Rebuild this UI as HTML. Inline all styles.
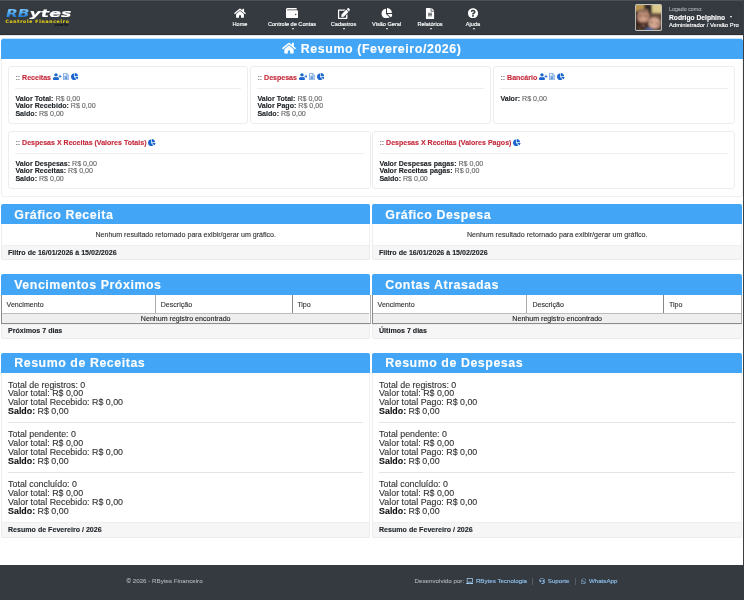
<!DOCTYPE html>
<html lang="pt-br">
<head>
<meta charset="utf-8">
<title>RBytes Financeiro</title>
<style>
*{box-sizing:border-box;margin:0;padding:0}
html,body{width:744px;height:600px;overflow:hidden;background:#fff;font-family:"Liberation Sans",Arial,sans-serif;color:#212529}
.abs{position:absolute}
#wrap{position:absolute;left:0;top:0;width:744px;height:600px;overflow:hidden;will-change:transform;-webkit-text-stroke:.12px}
#hdr{position:absolute;left:0;top:0;width:744px;height:35px;background:#343a40;border-bottom:1px solid #292d31}
#edge{position:absolute;left:743px;top:0;width:1px;height:600px;background:#3a3f44}
.nav{position:absolute;top:0;height:34px;width:0;color:#fff;font-size:5.6px;white-space:nowrap}
.nav svg{position:absolute;left:0;top:7.5px;transform:translateX(-50%);fill:#fff}
.nav span{position:absolute;left:0;top:21.3px;transform:translateX(-50%);line-height:6.5px;-webkit-text-stroke:.15px #fff}
.nav i{position:absolute;left:-0.3px;top:27.7px;border-left:1.9px solid transparent;border-right:1.9px solid transparent;border-top:2.2px solid #f4f4f4}
.bar{position:absolute;background:#42a5f5;border-radius:2px 2px 0 0}
.card{position:absolute;background:#fff;border:1px solid #ededed;border-radius:3px;height:58px}
.card .t{position:absolute;left:6.4px;top:6.9px;font-size:7.05px;line-height:8px;font-weight:bold;color:#c5283a;white-space:nowrap}
.card .t i{font-style:normal;color:#7d7d7d}
.card .hr{position:absolute;left:6.4px;right:6.4px;top:21px;height:1px;background:#efefef}
.card .l{position:absolute;left:6.4px;font-size:7.09px;line-height:8px;height:8px;color:#666;white-space:nowrap}
.card .l b{color:#212529}
.card svg{vertical-align:-0.6px;fill:#1a66cc;position:relative;top:0px}
.r1 svg{top:-0.5px}
.panel{position:absolute;border:1px solid #e3e3e3;border-top:none;background:#fff}
.ph{position:absolute;background:#42a5f5;color:#fff;font-weight:bold;font-size:12.4px;letter-spacing:.55px;line-height:20px;height:20px;padding-left:12.8px;padding-top:0.4px;border-radius:2px 2px 0 0;white-space:nowrap}
.pf{position:absolute;background:#f6f6f6;border-top:1px solid #ececec;font-weight:bold;font-size:7.09px;line-height:15.8px;padding-left:5.8px;color:#212529;white-space:nowrap}
.msg{position:absolute;text-align:center;font-size:7.09px;line-height:8px;color:#333;white-space:nowrap}
.th{position:absolute;font-size:7.09px;line-height:18px;height:18px;color:#333;white-space:nowrap}
.vl{position:absolute;width:1px;background:#ddd}
.none{position:absolute;background:#eee;border-top:1px solid #b5b5b5;border-bottom:1px solid #b5b5b5;text-align:center;font-size:7.09px;line-height:9px;height:10.5px;color:#222}
.sum{position:absolute;font-size:8.86px;line-height:8.75px;color:#333;white-space:nowrap}
.sum b{color:#111}
.shr{position:absolute;height:1px;background:#e4e4e4}
#ftr{position:absolute;left:0;top:565px;width:744px;height:35px;background:#343a40}
#ftr a{color:#6bb6ff;text-decoration:none}
#ftr svg{fill:#6bb6ff;vertical-align:-0.8px}
#ftr .sep{color:#5a6168}
</style>
</head>
<body>
<div id="wrap">
<div id="hdr">
<div class="abs" style="left:0;top:0;width:744px;height:1px;background:#4d5156"></div>
<div class="abs" id="logo1" style="left:5.6px;top:6.9px;font-family:'DejaVu Sans',sans-serif;font-size:9.8px;line-height:13px;font-weight:bold;font-style:italic;color:#fff;transform:scaleX(1.56);transform-origin:0 0;white-space:nowrap"><span style="background:linear-gradient(180deg,#6fc0fb 25%,#2583d8 75%);-webkit-background-clip:text;background-clip:text;color:transparent">RB</span><span style="font-size:11.2px">ytes</span></div>
<div class="abs" id="logo2" style="left:5.4px;top:19.2px;font-family:'DejaVu Sans',sans-serif;font-size:4.5px;line-height:6px;font-weight:bold;color:#e6d117;letter-spacing:.75px;white-space:nowrap">Controle Financeiro</div>
<div class="abs" style="left:54px;top:23px;font-size:3.2px;line-height:4px;font-weight:bold;font-style:italic;color:#111;letter-spacing:.45px;white-space:nowrap">.com.br</div>
<div class="nav" style="left:240px"><svg width="13" height="10.4" viewBox="0 0 576 512"><path d="M280.4 148.3L96 300.1V464a16 16 0 0 0 16 16l112.100-.3a16 16 0 0 0 15.900-16V368a16 16 0 0 1 16-16h64a16 16 0 0 1 16 16v95.600a16 16 0 0 0 16 16.100L464 480a16 16 0 0 0 16-16V300L295.700 148.300a12.200 12.200 0 0 0-15.300 0zM571.600 251.500L488 182.600V44.100a12 12 0 0 0-12-12h-56a12 12 0 0 0-12 12v72.600L318.500 43a48 48 0 0 0-61 0L4.300 251.500a12 12 0 0 0-1.600 16.900l25.500 31a12 12 0 0 0 16.900 1.600l235.200-193.700a12.200 12.200 0 0 1 15.300 0L530.900 301a12 12 0 0 0 16.900-1.600l25.500-31a12 12 0 0 0-1.700-16.900z"/></svg><span>Home</span></div>
<div class="nav" style="left:292px"><svg width="12" height="10.6" viewBox="0 0 512 448"><path d="M461.200 96H64c-8.800 0-16-7.200-16-16s7.200-16 16-16h384c8.800 0 16-7.200 16-16 0-26.500-21.500-48-48-48H64C28.700 0 0 28.700 0 64v320c0 35.300 28.700 64 64 64h397.200c28 0 50.800-21.500 50.800-48V144c0-26.500-22.800-48-50.800-48zM416 304c-17.700 0-32-14.300-32-32s14.300-32 32-32 32 14.300 32 32-14.300 32-32 32z"/></svg><span>Controle de Contas</span><i></i></div>
<div class="nav" style="left:343.5px"><svg width="12.5" height="11" viewBox="0 0 576 512"><path d="M402.600 83.200l90.200 90.200c3.800 3.800 3.800 10 0 13.800L274.400 405.600l-92.800 10.300c-12.400 1.400-22.900-9.100-21.500-21.500l10.300-92.800L388.800 83.200c3.800-3.800 10-3.800 13.800 0zm162-22.900l-48.800-48.800c-15.200-15.200-39.900-15.200-55.200 0l-35.400 35.400c-3.800 3.800-3.800 10 0 13.800l90.200 90.200c3.800 3.800 10 3.800 13.800 0l35.400-35.400c15.200-15.300 15.200-40 0-55.200zM384 346.200V448H64V128h229.800c3.200 0 6.200-1.300 8.500-3.500l40-40c7.600-7.600 2.200-20.500-8.500-20.500H48C21.500 64 0 85.500 0 112v352c0 26.500 21.500 48 48 48h352c26.500 0 48-21.500 48-48V306.200c0-10.700-12.900-16-20.500-8.500l-40 40c-2.200 2.300-3.500 5.300-3.500 8.500z"/></svg><span>Cadastros</span><i></i></div>
<div class="nav" style="left:386.6px"><svg width="11.5" height="10.5" viewBox="0 0 544 512"><path d="M527.800 288H290.500l158 158c6 6 16 6.500 22.200.7 38.700-36.500 65.300-85.600 73.100-140.900 1.400-9.500-6.400-17.800-16-17.800zm-15.800-64.800C503.700 103.700 408.300 8.300 288.800 0 279.700-.6 272 7.100 272 16.200V240h223.800c9.100 0 16.800-7.700 16.200-16.800zM224 288V50.700c0-9.600-8.300-17.400-17.800-16C86.900 51.600-4.200 155.900.1 280.400 4.600 408.500 114.900 513.600 243.100 512c50.400-.6 97-16.900 135.300-44 7.900-5.600 8.400-17.200 1.600-24.100L224 288z"/></svg><span>Visão Geral</span><i></i></div>
<div class="nav" style="left:430px"><svg width="8.5" height="11" viewBox="0 0 384 512"><path d="M224 136V0H24C10.700 0 0 10.700 0 24v464c0 13.300 10.700 24 24 24h336c13.300 0 24-10.700 24-24V160H248c-13.200 0-24-10.800-24-24zm64 236c0 6.600-5.400 12-12 12H108c-6.600 0-12-5.400-12-12v-8c0-6.600 5.400-12 12-12h168c6.600 0 12 5.400 12 12v8zm0-64c0 6.600-5.400 12-12 12H108c-6.600 0-12-5.400-12-12v-8c0-6.600 5.400-12 12-12h168c6.600 0 12 5.400 12 12v8zm0-72v8c0 6.600-5.400 12-12 12H108c-6.600 0-12-5.400-12-12v-8c0-6.600 5.400-12 12-12h168c6.600 0 12 5.400 12 12zm96-114.100v6.100H256V0h6.100c6.400 0 12.500 2.500 17 7l97.900 98c4.500 4.500 7 10.600 7 16.900z"/></svg><span>Relatórios</span><i></i></div>
<div class="nav" style="left:473px"><svg width="10.5" height="10.5" viewBox="0 0 512 512"><path d="M504 256c0 137-111 248-248 248S8 393 8 256C8 119.100 119 8 256 8s248 111.100 248 248zM262.700 90c-54.500 0-89.300 23-116.500 63.800-3.500 5.300-2.400 12.400 2.700 16.300l34.700 26.300c5.200 3.900 12.600 3 16.700-2.100 17.900-22.700 30.100-35.800 57.300-35.800 20.400 0 45.700 13.100 45.700 33 0 15-12.400 22.700-32.500 34C247.100 238.500 216 254.900 216 296v4c0 6.600 5.400 12 12 12h56c6.600 0 12-5.400 12-12v-1.300c0-28.500 83.200-29.600 83.200-106.700 0-58-60.200-102-116.500-102zM256 338c-25.400 0-46 20.600-46 46 0 25.400 20.600 46 46 46s46-20.600 46-46c0-25.400-20.600-46-46-46z"/></svg><span>Ajuda</span><i></i></div>
<svg class="abs" style="left:634.5px;top:4px" width="27" height="27" viewBox="0 0 27 27">
<defs><filter id="bl" x="-10%" y="-10%" width="120%" height="120%"><feGaussianBlur stdDeviation="1"/></filter><clipPath id="cp"><rect x="0.9" y="0.9" width="25.2" height="25.2" rx="1.1"/></clipPath></defs>
<rect x="0" y="0" width="27" height="27" rx="1.8" fill="#c4c4c1"/>
<g clip-path="url(#cp)"><g filter="url(#bl)">
<rect x="-2" y="-2" width="31" height="31" fill="#5e4a3e"/>
<rect x="-1" y="-1" width="10" height="8" fill="#b9954f"/>
<rect x="9" y="1" width="8" height="10" fill="#2b2723"/>
<rect x="17" y="-1" width="11" height="10" fill="#dccb8c"/>
<rect x="-1" y="7" width="4" height="21" fill="#3d2d27"/>
<ellipse cx="8.4" cy="13" rx="6.2" ry="7.6" fill="#bd8d76"/>
<ellipse cx="8.4" cy="6.6" rx="5.2" ry="1.8" fill="#8d6d5a"/>
<ellipse cx="8.2" cy="14.5" rx="3" ry="2.5" fill="#cf9f8a"/>
<ellipse cx="5.6" cy="12.3" rx="1.3" ry="0.7" fill="#4a3028"/>
<ellipse cx="10.8" cy="12.3" rx="1.3" ry="0.7" fill="#4a3028"/>
<path d="M1.800 15.500 Q2 25 8.300 26 Q14.200 25.500 14.800 15.500 Q11.500 19 8.300 18.300 Q5 19 1.800 15.500z" fill="#3f2a22"/>
<ellipse cx="8.300" cy="21.400" rx="2.200" ry="0.700" fill="#9a6e60"/>
<ellipse cx="19.800" cy="13" rx="6.200" ry="4.200" fill="#6b5141"/>
<ellipse cx="19.300" cy="19" rx="5.800" ry="5.800" fill="#d6a792"/>
<ellipse cx="22.400" cy="19.600" rx="1.300" ry="0.800" fill="#4f302f"/>
<ellipse cx="16.600" cy="18.400" rx="1.200" ry="0.800" fill="#5f403c"/>
<rect x="10.500" y="24" width="8" height="4" fill="#45609a"/>
<rect x="-1" y="24" width="4" height="5" fill="#2e2325"/>
</g></g></svg>
<div class="abs" style="left:669px;top:6px;font-size:5.3px;line-height:6px;color:#a6abb0;white-space:nowrap">Logado como:</div>
<div class="abs" style="left:669px;top:13.6px;font-size:6.7px;line-height:8px;font-weight:bold;color:#fff;white-space:nowrap">Rodrigo Delphino</div>
<div class="abs" style="left:729.6px;top:16.2px;border-left:1.9px solid transparent;border-right:1.9px solid transparent;border-top:2.1px solid #fff"></div>
<div class="abs" style="left:669px;top:22.2px;font-size:5.85px;line-height:7px;color:#fff;white-space:nowrap">Administrador / Versão Pro</div>
</div>
<div id="edge"></div>
<div class="abs" style="left:0;top:35px;width:743px;height:1px;background:rgba(52,58,64,.13)"></div>
<div class="abs" style="left:2px;top:38px;width:740px;height:1px;background:rgba(66,165,245,.3)"></div>
<div class="bar" style="left:1px;top:39px;width:742px;height:20px"></div>
<svg class="abs" style="left:281.8px;top:42.2px;fill:#fff" width="14" height="12.4" viewBox="0 0 576 512"><path d="M280.4 148.3L96 300.1V464a16 16 0 0 0 16 16l112.100-.3a16 16 0 0 0 15.900-16V368a16 16 0 0 1 16-16h64a16 16 0 0 1 16 16v95.600a16 16 0 0 0 16 16.100L464 480a16 16 0 0 0 16-16V300L295.700 148.300a12.200 12.200 0 0 0-15.300 0zM571.600 251.500L488 182.600V44.100a12 12 0 0 0-12-12h-56a12 12 0 0 0-12 12v72.600L318.500 43a48 48 0 0 0-61 0L4.300 251.500a12 12 0 0 0-1.600 16.900l25.500 31a12 12 0 0 0 16.900 1.600l235.200-193.700a12.200 12.200 0 0 1 15.300 0L530.900 301a12 12 0 0 0 16.900-1.600l25.500-31a12 12 0 0 0-1.700-16.900z"/></svg>
<div class="abs" style="left:300.8px;top:39.8px;font-size:12.4px;line-height:19px;font-weight:bold;color:#fff;letter-spacing:.58px;white-space:nowrap">Resumo (Fevereiro/2026)</div>
<div class="card r1" style="left:8px;top:66px;width:240px"><div class="t"><i>::</i> Receitas <svg width="8.5" height="7.09" viewBox="0 0 640 512"><path d="M624 208h-64v-64c0-8.800-7.200-16-16-16h-32c-8.800 0-16 7.200-16 16v64h-64c-8.800 0-16 7.200-16 16v32c0 8.800 7.200 16 16 16h64v64c0 8.800 7.200 16 16 16h32c8.800 0 16-7.200 16-16v-64h64c8.800 0 16-7.200 16-16v-32c0-8.800-7.200-16-16-16zm-400 48c70.700 0 128-57.300 128-128S294.700 0 224 0 96 57.300 96 128s57.300 128 128 128zm89.600 32h-16.700c-22.200 10.200-46.900 16-72.900 16s-50.600-5.800-72.900-16h-16.700C60.200 288 0 348.200 0 422.400V464c0 26.500 21.500 48 48 48h352c26.500 0 48-21.500 48-48v-41.600c0-74.200-60.200-134.400-134.400-134.400z"/></svg> <svg width="5.8" height="7.09" viewBox="0 0 58 73" preserveAspectRatio="none" style="margin:0 -0.1px 0 -0.2px"><path d="M5 4h32l16 16v49H5z" fill="#f4f9ff" stroke="#4f8fdc" stroke-width="7" stroke-linejoin="round"/><path d="M36 4v17h17" fill="none" stroke="#4f8fdc" stroke-width="5"/><path d="M15 33h28M15 45h28M15 57h28" stroke="#1a62c6" stroke-width="7" fill="none"/></svg> <svg width="7.53" height="7.09" viewBox="0 0 544 512"><path d="M527.800 288H290.500l158 158c6 6 16 6.500 22.200.7 38.700-36.500 65.300-85.600 73.100-140.900 1.400-9.500-6.400-17.800-16-17.800zm-15.800-64.800C503.700 103.700 408.300 8.300 288.800 0 279.700-.6 272 7.100 272 16.200V240h223.800c9.100 0 16.800-7.700 16.200-16.800zM224 288V50.700c0-9.600-8.300-17.400-17.800-16C86.900 51.600-4.200 155.900.1 280.400 4.600 408.500 114.900 513.600 243.100 512c50.400-.6 97-16.900 135.300-44 7.900-5.600 8.400-17.200 1.600-24.100L224 288z"/></svg></div><div class="hr"></div><div class="l" style="top:28.3px"><b>Valor Total:</b> R$ 0,00</div><div class="l" style="top:35.3px"><b>Valor Recebido:</b> R$ 0,00</div><div class="l" style="top:42.6px"><b>Saldo:</b> R$ 0,00</div></div>
<div class="card r1" style="left:250px;top:66px;width:241px"><div class="t"><i>::</i> Despesas <svg width="8.5" height="7.09" viewBox="0 0 640 512"><path d="M624 208h-64v-64c0-8.800-7.200-16-16-16h-32c-8.800 0-16 7.200-16 16v64h-64c-8.800 0-16 7.200-16 16v32c0 8.800 7.200 16 16 16h64v64c0 8.800 7.200 16 16 16h32c8.800 0 16-7.200 16-16v-64h64c8.800 0 16-7.200 16-16v-32c0-8.800-7.200-16-16-16zm-400 48c70.700 0 128-57.300 128-128S294.700 0 224 0 96 57.300 96 128s57.300 128 128 128zm89.600 32h-16.700c-22.200 10.200-46.900 16-72.900 16s-50.600-5.800-72.900-16h-16.700C60.200 288 0 348.200 0 422.400V464c0 26.500 21.500 48 48 48h352c26.500 0 48-21.500 48-48v-41.600c0-74.200-60.200-134.400-134.400-134.400z"/></svg> <svg width="5.8" height="7.09" viewBox="0 0 58 73" preserveAspectRatio="none" style="margin:0 -0.1px 0 -0.2px"><path d="M5 4h32l16 16v49H5z" fill="#f4f9ff" stroke="#4f8fdc" stroke-width="7" stroke-linejoin="round"/><path d="M36 4v17h17" fill="none" stroke="#4f8fdc" stroke-width="5"/><path d="M15 33h28M15 45h28M15 57h28" stroke="#1a62c6" stroke-width="7" fill="none"/></svg> <svg width="7.53" height="7.09" viewBox="0 0 544 512"><path d="M527.800 288H290.500l158 158c6 6 16 6.500 22.200.7 38.700-36.500 65.300-85.600 73.100-140.900 1.400-9.500-6.400-17.800-16-17.800zm-15.800-64.800C503.700 103.700 408.300 8.300 288.800 0 279.700-.6 272 7.100 272 16.200V240h223.800c9.100 0 16.800-7.700 16.200-16.800zM224 288V50.700c0-9.600-8.300-17.400-17.800-16C86.900 51.600-4.200 155.900.1 280.400 4.600 408.500 114.900 513.600 243.100 512c50.400-.6 97-16.900 135.300-44 7.900-5.600 8.400-17.200 1.600-24.100L224 288z"/></svg></div><div class="hr"></div><div class="l" style="top:28.3px"><b>Valor Total:</b> R$ 0,00</div><div class="l" style="top:35.3px"><b>Valor Pago:</b> R$ 0,00</div><div class="l" style="top:42.6px"><b>Saldo:</b> R$ 0,00</div></div>
<div class="card r1" style="left:493px;top:66px;width:242px"><div class="t"><i>::</i> Bancário <svg width="8.5" height="7.09" viewBox="0 0 640 512"><path d="M624 208h-64v-64c0-8.800-7.200-16-16-16h-32c-8.800 0-16 7.200-16 16v64h-64c-8.800 0-16 7.200-16 16v32c0 8.800 7.200 16 16 16h64v64c0 8.800 7.200 16 16 16h32c8.800 0 16-7.200 16-16v-64h64c8.800 0 16-7.200 16-16v-32c0-8.800-7.200-16-16-16zm-400 48c70.700 0 128-57.300 128-128S294.700 0 224 0 96 57.300 96 128s57.300 128 128 128zm89.600 32h-16.700c-22.200 10.200-46.900 16-72.900 16s-50.600-5.800-72.900-16h-16.700C60.200 288 0 348.200 0 422.400V464c0 26.500 21.500 48 48 48h352c26.500 0 48-21.500 48-48v-41.600c0-74.200-60.200-134.400-134.400-134.400z"/></svg> <svg width="5.8" height="7.09" viewBox="0 0 58 73" preserveAspectRatio="none" style="margin:0 -0.1px 0 -0.2px"><path d="M5 4h32l16 16v49H5z" fill="#f4f9ff" stroke="#4f8fdc" stroke-width="7" stroke-linejoin="round"/><path d="M36 4v17h17" fill="none" stroke="#4f8fdc" stroke-width="5"/><path d="M15 33h28M15 45h28M15 57h28" stroke="#1a62c6" stroke-width="7" fill="none"/></svg> <svg width="7.53" height="7.09" viewBox="0 0 544 512"><path d="M527.800 288H290.500l158 158c6 6 16 6.500 22.200.7 38.700-36.500 65.300-85.600 73.100-140.900 1.400-9.500-6.400-17.800-16-17.800zm-15.800-64.800C503.700 103.700 408.300 8.300 288.800 0 279.700-.6 272 7.100 272 16.200V240h223.800c9.100 0 16.800-7.700 16.200-16.800zM224 288V50.700c0-9.600-8.300-17.400-17.800-16C86.900 51.600-4.200 155.900.1 280.400 4.600 408.500 114.900 513.600 243.100 512c50.400-.6 97-16.900 135.300-44 7.900-5.600 8.400-17.200 1.600-24.100L224 288z"/></svg></div><div class="hr"></div><div class="l" style="top:28.3px"><b>Valor:</b> R$ 0,00</div></div>
<div class="card" style="left:8px;top:131px;width:363px"><div class="t"><i>::</i> Despesas X Receitas (Valores Totais) <svg width="7.53" height="7.09" viewBox="0 0 544 512"><path d="M527.800 288H290.500l158 158c6 6 16 6.500 22.200.7 38.700-36.500 65.300-85.600 73.100-140.900 1.400-9.500-6.400-17.800-16-17.800zm-15.800-64.800C503.700 103.700 408.300 8.300 288.800 0 279.700-.6 272 7.100 272 16.200V240h223.800c9.100 0 16.800-7.700 16.200-16.800zM224 288V50.700c0-9.600-8.300-17.400-17.800-16C86.900 51.600-4.200 155.900.1 280.400 4.600 408.500 114.900 513.600 243.100 512c50.400-.6 97-16.900 135.300-44 7.900-5.600 8.400-17.200 1.600-24.100L224 288z"/></svg></div><div class="hr"></div><div class="l" style="top:28.3px"><b>Valor Despesas:</b> R$ 0,00</div><div class="l" style="top:35.3px"><b>Valor Receitas:</b> R$ 0,00</div><div class="l" style="top:42.6px"><b>Saldo:</b> R$ 0,00</div></div>
<div class="card" style="left:372px;top:131px;width:363px"><div class="t"><i>::</i> Despesas X Receitas (Valores Pagos) <svg width="7.53" height="7.09" viewBox="0 0 544 512"><path d="M527.800 288H290.500l158 158c6 6 16 6.500 22.200.7 38.700-36.500 65.300-85.600 73.100-140.900 1.400-9.500-6.400-17.800-16-17.800zm-15.800-64.800C503.700 103.700 408.300 8.300 288.800 0 279.700-.6 272 7.100 272 16.200V240h223.800c9.100 0 16.800-7.700 16.200-16.800zM224 288V50.700c0-9.600-8.300-17.400-17.800-16C86.900 51.600-4.200 155.900.1 280.400 4.600 408.500 114.900 513.600 243.100 512c50.400-.6 97-16.900 135.300-44 7.900-5.600 8.400-17.200 1.600-24.100L224 288z"/></svg></div><div class="hr"></div><div class="l" style="top:28.3px"><b>Valor Despesas pagas:</b> R$ 0,00</div><div class="l" style="top:35.3px"><b>Valor Receitas pagas:</b> R$ 0,00</div><div class="l" style="top:42.6px"><b>Saldo:</b> R$ 0,00</div></div>
<div class="abs" style="left:1px;top:59px;width:742px;height:138px;border:1px solid #f0f0f0;border-top:none;border-radius:0 0 3px 3px"></div>
<div class="abs" style="left:1px;top:215px;width:369.4px;height:31px;border-left:1px solid #ededed;border-right:1px solid #ededed;background:#fff"></div>
<div class="bar" style="left:1px;top:204px;width:369.4px;height:20px"></div>
<div class="abs" style="left:14.2px;top:207.60px;font-size:12.4px;line-height:14px;height:14px;white-space:nowrap;font-weight:bold;color:#fff;letter-spacing:.55px;">Gráfico Receita</div>
<div class="abs" style="left:1px;top:230.90px;font-size:7.09px;line-height:8px;height:8px;white-space:nowrap;width:369.4px;text-align:center;color:#333;">Nenhum resultado retornado para exibir/gerar um gráfico.</div>
<div class="abs" style="left:1px;top:245px;width:369.4px;height:15px;background:#f6f6f6;border:1px solid #ececec;border-top-color:#efefef;border-radius:0 0 2.5px 2.5px"></div>
<div class="abs" style="left:8px;top:249.00px;font-size:7.09px;line-height:8px;height:8px;white-space:nowrap;font-weight:bold;color:#212529;">Filtro de 16/01/2026 à 15/02/2026</div>
<div class="abs" style="left:372px;top:215px;width:370.4px;height:31px;border-left:1px solid #ededed;border-right:1px solid #ededed;background:#fff"></div>
<div class="bar" style="left:372px;top:204px;width:370.4px;height:20px"></div>
<div class="abs" style="left:385.2px;top:207.60px;font-size:12.4px;line-height:14px;height:14px;white-space:nowrap;font-weight:bold;color:#fff;letter-spacing:.55px;">Gráfico Despesa</div>
<div class="abs" style="left:372px;top:230.90px;font-size:7.09px;line-height:8px;height:8px;white-space:nowrap;width:370.4px;text-align:center;color:#333;">Nenhum resultado retornado para exibir/gerar um gráfico.</div>
<div class="abs" style="left:372px;top:245px;width:370.4px;height:15px;background:#f6f6f6;border:1px solid #ececec;border-top-color:#efefef;border-radius:0 0 2.5px 2.5px"></div>
<div class="abs" style="left:379px;top:249.00px;font-size:7.09px;line-height:8px;height:8px;white-space:nowrap;font-weight:bold;color:#212529;">Filtro de 16/01/2026 à 15/02/2026</div>
<div class="bar" style="left:1px;top:274.4px;width:369.4px;height:20.6px"></div>
<div class="abs" style="left:14.2px;top:278.10px;font-size:12.4px;line-height:14px;height:14px;white-space:nowrap;font-weight:bold;color:#fff;letter-spacing:.55px;">Vencimentos Próximos</div>
<div class="abs" style="left:1px;top:295px;width:370px;height:29px;border:1px solid #8c8c8c;border-right-color:#b0b0b0;border-top:none;background:#fff"></div>
<div class="abs" style="left:2px;top:312.6px;width:367.4px;height:10.4px;background:#eee;border-top:1px solid #bdbdbd"></div>
<div class="vl" style="left:154.6px;top:295px;height:18px;background:#aaa"></div>
<div class="vl" style="left:291.6px;top:295px;height:18px;background:#888"></div>
<div class="abs" style="left:6.6px;top:300.80px;font-size:7.09px;line-height:8px;height:8px;white-space:nowrap;color:#333;">Vencimento</div>
<div class="abs" style="left:160.7px;top:300.80px;font-size:7.09px;line-height:8px;height:8px;white-space:nowrap;color:#333;">Descrição</div>
<div class="abs" style="left:297.2px;top:300.80px;font-size:7.09px;line-height:8px;height:8px;white-space:nowrap;color:#333;">Tipo</div>
<div class="abs" style="left:1px;top:314.75px;font-size:7.09px;line-height:8px;height:8px;white-space:nowrap;width:369.4px;text-align:center;color:#222;">Nenhum registro encontrado</div>
<div class="abs" style="left:1px;top:324px;width:369.4px;height:15px;background:#f6f6f6;border:1px solid #ececec;border-top-color:#efefef;border-radius:0 0 2.5px 2.5px"></div>
<div class="abs" style="left:8px;top:326.80px;font-size:7.09px;line-height:8px;height:8px;white-space:nowrap;font-weight:bold;color:#212529;">Próximos 7 dias</div>
<div class="bar" style="left:372px;top:274.4px;width:370.4px;height:20.6px"></div>
<div class="abs" style="left:385.2px;top:278.10px;font-size:12.4px;line-height:14px;height:14px;white-space:nowrap;font-weight:bold;color:#fff;letter-spacing:.55px;">Contas Atrasadas</div>
<div class="abs" style="left:372px;top:295px;width:370.4px;height:29px;border:1px solid #8c8c8c;border-right-color:#b0b0b0;border-top:none;background:#fff"></div>
<div class="abs" style="left:373px;top:312.6px;width:368.4px;height:10.4px;background:#eee;border-top:1px solid #bdbdbd"></div>
<div class="vl" style="left:526.3000000000001px;top:295px;height:18px;background:#aaa"></div>
<div class="vl" style="left:663.3000000000001px;top:295px;height:18px;background:#888"></div>
<div class="abs" style="left:377.6px;top:300.80px;font-size:7.09px;line-height:8px;height:8px;white-space:nowrap;color:#333;">Vencimento</div>
<div class="abs" style="left:532.4000000000001px;top:300.80px;font-size:7.09px;line-height:8px;height:8px;white-space:nowrap;color:#333;">Descrição</div>
<div class="abs" style="left:668.9000000000001px;top:300.80px;font-size:7.09px;line-height:8px;height:8px;white-space:nowrap;color:#333;">Tipo</div>
<div class="abs" style="left:372px;top:314.75px;font-size:7.09px;line-height:8px;height:8px;white-space:nowrap;width:370.4px;text-align:center;color:#222;">Nenhum registro encontrado</div>
<div class="abs" style="left:372px;top:324px;width:370.4px;height:15px;background:#f6f6f6;border:1px solid #ececec;border-top-color:#efefef;border-radius:0 0 2.5px 2.5px"></div>
<div class="abs" style="left:379px;top:326.80px;font-size:7.09px;line-height:8px;height:8px;white-space:nowrap;font-weight:bold;color:#212529;">Últimos 7 dias</div>
<div class="abs" style="left:1px;top:365px;width:369.4px;height:158px;border-left:1px solid #ededed;border-right:1px solid #ededed;background:#fff"></div>
<div class="bar" style="left:1px;top:353px;width:369.4px;height:19.7px"></div>
<div class="abs" style="left:14.2px;top:356.20px;font-size:12.4px;line-height:14px;height:14px;white-space:nowrap;font-weight:bold;color:#fff;letter-spacing:.55px;">Resumo de Receitas</div>
<div class="abs" style="left:8.1px;top:380.00px;font-size:8.86px;line-height:10px;height:10px;white-space:nowrap;color:#333;">Total de registros: 0</div>
<div class="abs" style="left:8.1px;top:388.00px;font-size:8.86px;line-height:10px;height:10px;white-space:nowrap;color:#333;">Valor total: R$ 0,00</div>
<div class="abs" style="left:8.1px;top:397.00px;font-size:8.86px;line-height:10px;height:10px;white-space:nowrap;color:#333;">Valor total Recebido: R$ 0,00</div>
<div class="abs" style="left:8.1px;top:406.00px;font-size:8.86px;line-height:10px;height:10px;white-space:nowrap;color:#333;"><b style="color:#111">Saldo:</b> R$ 0,00</div>
<div class="abs" style="left:8.1px;top:429.00px;font-size:8.86px;line-height:10px;height:10px;white-space:nowrap;color:#333;">Total pendente: 0</div>
<div class="abs" style="left:8.1px;top:438.00px;font-size:8.86px;line-height:10px;height:10px;white-space:nowrap;color:#333;">Valor total: R$ 0,00</div>
<div class="abs" style="left:8.1px;top:447.00px;font-size:8.86px;line-height:10px;height:10px;white-space:nowrap;color:#333;">Valor total Recebido: R$ 0,00</div>
<div class="abs" style="left:8.1px;top:456.00px;font-size:8.86px;line-height:10px;height:10px;white-space:nowrap;color:#333;"><b style="color:#111">Saldo:</b> R$ 0,00</div>
<div class="abs" style="left:8.1px;top:479.00px;font-size:8.86px;line-height:10px;height:10px;white-space:nowrap;color:#333;">Total concluído: 0</div>
<div class="abs" style="left:8.1px;top:488.00px;font-size:8.86px;line-height:10px;height:10px;white-space:nowrap;color:#333;">Valor total: R$ 0,00</div>
<div class="abs" style="left:8.1px;top:497.00px;font-size:8.86px;line-height:10px;height:10px;white-space:nowrap;color:#333;">Valor total Recebido: R$ 0,00</div>
<div class="abs" style="left:8.1px;top:506.00px;font-size:8.86px;line-height:10px;height:10px;white-space:nowrap;color:#333;"><b style="color:#111">Saldo:</b> R$ 0,00</div>
<div class="shr" style="left:8px;top:422px;width:354.9px"></div>
<div class="shr" style="left:8px;top:472px;width:354.9px"></div>
<div class="abs" style="left:1px;top:522px;width:369.4px;height:16px;background:#f6f6f6;border:1px solid #ececec;border-top-color:#efefef;border-radius:0 0 2.5px 2.5px"></div>
<div class="abs" style="left:8px;top:525.90px;font-size:7.09px;line-height:8px;height:8px;white-space:nowrap;font-weight:bold;color:#212529;">Resumo de Fevereiro / 2026</div>
<div class="abs" style="left:372px;top:365px;width:370.4px;height:158px;border-left:1px solid #ededed;border-right:1px solid #ededed;background:#fff"></div>
<div class="bar" style="left:372px;top:353px;width:370.4px;height:19.7px"></div>
<div class="abs" style="left:385.2px;top:356.20px;font-size:12.4px;line-height:14px;height:14px;white-space:nowrap;font-weight:bold;color:#fff;letter-spacing:.55px;">Resumo de Despesas</div>
<div class="abs" style="left:379.1px;top:380.00px;font-size:8.86px;line-height:10px;height:10px;white-space:nowrap;color:#333;">Total de registros: 0</div>
<div class="abs" style="left:379.1px;top:388.00px;font-size:8.86px;line-height:10px;height:10px;white-space:nowrap;color:#333;">Valor total: R$ 0,00</div>
<div class="abs" style="left:379.1px;top:397.00px;font-size:8.86px;line-height:10px;height:10px;white-space:nowrap;color:#333;">Valor total Pago: R$ 0,00</div>
<div class="abs" style="left:379.1px;top:406.00px;font-size:8.86px;line-height:10px;height:10px;white-space:nowrap;color:#333;"><b style="color:#111">Saldo:</b> R$ 0,00</div>
<div class="abs" style="left:379.1px;top:429.00px;font-size:8.86px;line-height:10px;height:10px;white-space:nowrap;color:#333;">Total pendente: 0</div>
<div class="abs" style="left:379.1px;top:438.00px;font-size:8.86px;line-height:10px;height:10px;white-space:nowrap;color:#333;">Valor total: R$ 0,00</div>
<div class="abs" style="left:379.1px;top:447.00px;font-size:8.86px;line-height:10px;height:10px;white-space:nowrap;color:#333;">Valor total Pago: R$ 0,00</div>
<div class="abs" style="left:379.1px;top:456.00px;font-size:8.86px;line-height:10px;height:10px;white-space:nowrap;color:#333;"><b style="color:#111">Saldo:</b> R$ 0,00</div>
<div class="abs" style="left:379.1px;top:479.00px;font-size:8.86px;line-height:10px;height:10px;white-space:nowrap;color:#333;">Total concluído: 0</div>
<div class="abs" style="left:379.1px;top:488.00px;font-size:8.86px;line-height:10px;height:10px;white-space:nowrap;color:#333;">Valor total: R$ 0,00</div>
<div class="abs" style="left:379.1px;top:497.00px;font-size:8.86px;line-height:10px;height:10px;white-space:nowrap;color:#333;">Valor total Pago: R$ 0,00</div>
<div class="abs" style="left:379.1px;top:506.00px;font-size:8.86px;line-height:10px;height:10px;white-space:nowrap;color:#333;"><b style="color:#111">Saldo:</b> R$ 0,00</div>
<div class="shr" style="left:379px;top:422px;width:355.9px"></div>
<div class="shr" style="left:379px;top:472px;width:355.9px"></div>
<div class="abs" style="left:372px;top:522px;width:370.4px;height:16px;background:#f6f6f6;border:1px solid #ececec;border-top-color:#efefef;border-radius:0 0 2.5px 2.5px"></div>
<div class="abs" style="left:379px;top:525.90px;font-size:7.09px;line-height:8px;height:8px;white-space:nowrap;font-weight:bold;color:#212529;">Resumo de Fevereiro / 2026</div>
<div id="ftr"></div>
<div class="abs" style="left:126.5px;top:577.30px;font-size:6.2px;line-height:7px;height:7px;white-space:nowrap;color:#a9afb5;">© 2026 - RBytes Financeiro</div>
<div class="abs" style="left:414.6px;top:577.30px;font-size:6.2px;line-height:7px;height:7px;white-space:nowrap;color:#a9afb5;">Desenvolvido por:</div>
<svg class="abs" style="left:465.9px;top:577.9px;fill:#a6cff5" width="7.5" height="6" viewBox="0 0 640 512"><path d="M624 416H381.500c-.7 19.800-14.700 32-32.700 32H288c-18.700 0-33-17.500-32.800-32H16c-8.800 0-16 7.200-16 16v16c0 35.200 28.800 64 64 64h512c35.200 0 64-28.800 64-64v-16c0-8.800-7.200-16-16-16zM576 48c0-26.400-21.600-48-48-48H112C85.600 0 64 21.600 64 48v336h512V48zm-64 272H128V64h384v256z"/></svg>
<div class="abs" style="left:475.9px;top:577.30px;font-size:6.2px;line-height:7px;height:7px;white-space:nowrap;color:#8fc0ee;">RBytes Tecnologia</div>
<div class="abs" style="left:532.3px;top:577.5px;width:1px;height:7px;background:#555c63"></div>
<svg class="abs" style="left:538.8px;top:577.9px;fill:#8fc0ee" width="6" height="6" viewBox="0 0 512 512"><path d="M192 208c0-17.700-14.300-32-32-32h-16c-35.300 0-64 28.700-64 64v48c0 35.300 28.700 64 64 64h16c17.700 0 32-14.300 32-32V208zm176 144c35.300 0 64-28.700 64-64v-48c0-35.300-28.700-64-64-64h-16c-17.700 0-32 14.300-32 32v112c0 17.700 14.300 32 32 32h16zM256 0C113.200 0 4.600 118.800 0 256v16c0 8.800 7.200 16 16 16h16c8.800 0 16-7.200 16-16v-16c0-114.700 93.300-208 208-208s208 93.300 208 208h-.1c.1 2.400.1 16.600.1 16.600 0 87.700-71.100 158.800-158.800 158.800H256c-26.500 0-48 21.500-48 48s21.500 48 48 48h64c26.500 0 48-21.500 48-48h-15.200C469.600 480 512 385.900 512 272.600V256C507.400 118.800 398.800 0 256 0z"/></svg>
<div class="abs" style="left:547.8px;top:577.30px;font-size:6.2px;line-height:7px;height:7px;white-space:nowrap;color:#8fc0ee;">Suporte</div>
<div class="abs" style="left:574.8px;top:577.5px;width:1px;height:7px;background:#555c63"></div>
<svg class="abs" style="left:580.8px;top:577.7px;fill:#8fc0ee" width="5.4" height="6.2" viewBox="0 0 448 512"><path d="M380.900 97.100C339 55.100 283.200 32 223.900 32c-122.400 0-222 99.600-222 222 0 39.100 10.200 77.300 29.600 111L0 480l117.700-30.900c32.400 17.700 68.900 27 106.100 27h.1c122.300 0 224.100-99.600 224.100-222 0-59.300-25.200-115-67.100-157zm-157 341.600c-33.200 0-65.700-8.900-94-25.700l-6.700-4-69.800 18.300L72 359.200l-4.400-7c-18.500-29.400-28.200-63.300-28.200-98.200 0-101.700 82.800-184.500 184.600-184.500 49.300 0 95.600 19.200 130.400 54.100 34.800 34.900 56.200 81.200 56.100 130.500 0 101.800-84.900 184.600-186.600 184.600zm101.200-138.200c-5.500-2.800-32.800-16.200-37.900-18-5.100-1.900-8.800-2.800-12.500 2.800-3.700 5.600-14.300 18-17.600 21.800-3.200 3.700-6.500 4.200-12 1.400-32.600-16.300-54-29.100-75.500-66-5.700-9.800 5.700-9.100 16.300-30.300 1.800-3.700.9-6.900-.5-9.700-1.400-2.800-12.500-30.100-17.100-41.200-4.500-10.800-9.100-9.300-12.500-9.500-3.200-.2-6.900-.2-10.600-.2-3.700 0-9.700 1.400-14.800 6.900-5.100 5.600-19.400 19-19.400 46.300 0 27.300 19.900 53.700 22.600 57.400 2.800 3.700 39.100 59.700 94.800 83.800 35.200 15.200 49 16.500 66.600 13.900 10.700-1.600 32.800-13.400 37.400-26.400 4.600-13 4.600-24.100 3.200-26.400-1.300-2.500-5-3.900-10.500-6.600z"/></svg>
<div class="abs" style="left:588.9px;top:577.30px;font-size:6.2px;line-height:7px;height:7px;white-space:nowrap;color:#8fc0ee;">WhatsApp</div>
</div>
</body>
</html>
